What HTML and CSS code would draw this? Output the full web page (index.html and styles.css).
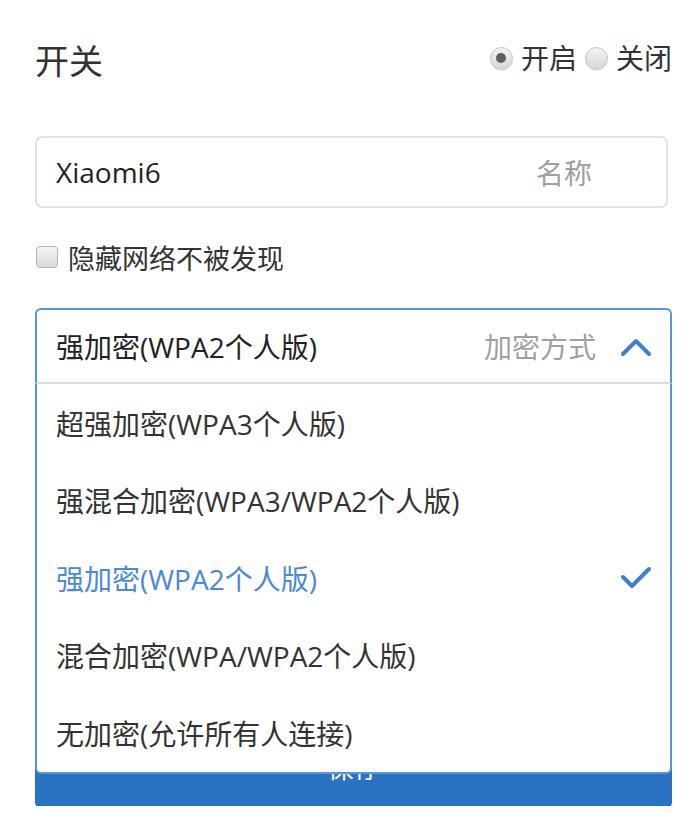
FILE: index.html
```html
<!DOCTYPE html>
<html lang="zh-CN">
<head>
<meta charset="utf-8">
<link rel="stylesheet" href="styles.css">
</head>
<body>
<div class="page">
  <div class="header">
    <div class="title">开关</div>
    <div class="radios">
      <span class="radio checked"></span><span class="radio-label">开启</span>
      <span class="radio"></span><span class="radio-label">关闭</span>
    </div>
  </div>

  <div class="field">
    <span class="field-value">Xiaomi6</span>
    <span class="field-label">名称</span>
  </div>

  <div class="check-row">
    <span class="checkbox"></span>
    <span class="check-label">隐藏网络不被发现</span>
  </div>

  <div class="select">
    <div class="select-head">
      <span class="select-value">强加密(WPA2个人版)</span>
      <span class="select-label">加密方式</span>
      <svg class="chevron" width="32" height="22" viewBox="0 0 32 22"><path d="M3 19 L16 6 L29 19" fill="none" stroke="#3f7fcb" stroke-width="4" stroke-linecap="round" stroke-linejoin="round"/></svg>
    </div>
    <ul class="options">
      <li class="option">超强加密(WPA3个人版)</li>
      <li class="option">强混合加密(WPA3/WPA2个人版)</li>
      <li class="option selected">强加密(WPA2个人版)<svg class="check" width="32" height="26" viewBox="0 0 32 26"><path d="M3 12 L12 21 L29 4" fill="none" stroke="#3f7fcb" stroke-width="4" stroke-linecap="round" stroke-linejoin="round"/></svg></li>
      <li class="option">混合加密(WPA/WPA2个人版)</li>
      <li class="option">无加密(允许所有人连接)</li>
    </ul>
  </div>

  <button class="save">保存</button>
</div>
</body>
</html>
```

FILE: styles.css
```css
* { box-sizing: border-box; }
html, body { margin: 0; padding: 0; background: #fff; }
body {
  font-family: "Open Sans", "Noto Sans CJK SC", sans-serif;
  color: #333;
}
.page {
  padding: 40px 28px 0 35px;
}
.header {
  display: flex;
  justify-content: space-between;
  align-items: center;
  height: 44px;
}
.title {
  font-size: 34px;
  line-height: 44px;
  color: #333;
  margin-top: -2px;
}
.radios {
  display: flex;
  align-items: center;
  margin-top: -8px;
}
.radio {
  width: 23px;
  height: 23px;
  border-radius: 50%;
  border: 1px solid #c4c4c4;
  background: linear-gradient(#f2f2f2, #d8d8d8);
  box-shadow: 0 1px 1px rgba(0,0,0,0.08);
  display: inline-flex;
  align-items: center;
  justify-content: center;
  margin-right: 8px;
}
.radio.checked::after {
  content: "";
  width: 10px;
  height: 10px;
  border-radius: 50%;
  background: #5f5f5f;
}
.radio-label {
  font-size: 28px;
  line-height: 34px;
  margin-right: 8px;
}
.radio-label:last-child { margin-right: 0; }

.field {
  margin-top: 52px;
  margin-right: 4px;
  height: 72px;
  border: 2px solid #e2e2e2;
  border-radius: 7px;
  display: flex;
  align-items: center;
  justify-content: space-between;
  padding: 0 74px 0 19px;
}
.field-value {
  font-size: 28px;
  color: #222;
}
.field-label {
  font-size: 28px;
  color: #a0a0a0;
}

.check-row {
  margin-top: 29px;
  height: 40px;
  display: flex;
  align-items: center;
}
.checkbox {
  width: 22px;
  height: 22px;
  border-radius: 4px;
  border: 1px solid #b5b5b5;
  background: linear-gradient(#f4f4f4, #d9d9d9);
  margin-right: 10px;
  margin-left: 1px;
}
.check-label {
  font-size: 27px;
  color: #333;
}

.select {
  position: relative;
  margin-top: 31px;
  z-index: 2;
}
.select-head {
  height: 76px;
  border: 2px solid #5a95d5;
  border-bottom: 2px solid #dcdcdc;
  border-radius: 6px 6px 0 0;
  display: flex;
  align-items: center;
  padding: 0 18px 0 19px;
  background: #fff;
}
.select-value {
  font-size: 28px;
  color: #222;
  flex: 1;
}
.select-label {
  font-size: 28px;
  color: #a0a0a0;
  margin-right: 24px;
}
.chevron { display: block; }

.options {
  position: absolute;
  left: 0;
  right: 0;
  top: 100%;
  margin: 0;
  padding: 0;
  list-style: none;
  background: #fff;
  border: 2px solid #5a95d5;
  border-top: none;
  border-radius: 0 0 6px 6px;
}
.option {
  height: 77.5px;
  display: flex;
  align-items: center;
  justify-content: space-between;
  padding: 0 18px 0 19px;
  font-size: 28px;
  color: #333;
}
.option.selected { color: #4a88d8; }
.check { display: block; }

.save {
  display: block;
  width: 100%;
  margin-top: 346px;
  height: 76px;
  border: none;
  border-radius: 6px;
  background: #2a73c2;
  box-shadow: 0 2px 0 #1d5ea6;
  color: #fff;
  font-family: inherit;
  font-size: 26px;
  padding: 0;
  line-height: 66px;
}
```
